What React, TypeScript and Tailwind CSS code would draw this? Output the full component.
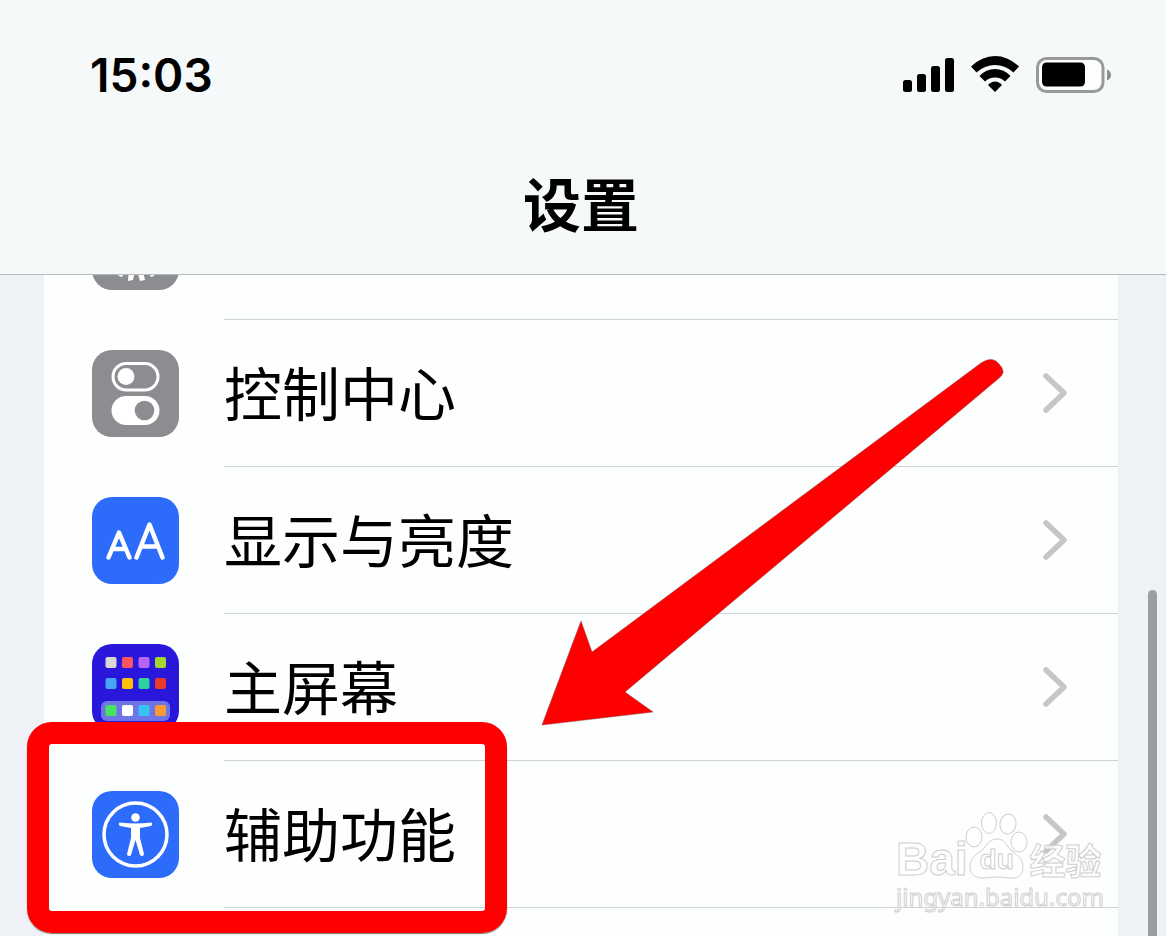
import React from 'react';

const GearIcon = () => (
  <svg viewBox="0 0 87 87" className="size-full">
    <rect width="87" height="87" rx="20" fill="#8b8d91" />
    <circle cx="43.5" cy="43.5" r="23" fill="none" stroke="#fff" strokeWidth="5" />
    <path
      d="M25 70l3-6 6 3-4 7-3-1zM37 64h7l-3 13-5 1zM44 64h6l3 13-5 1zM55 67l5-3 3 6-1 3-3 1z"
      fill="#fff"
    />
  </svg>
);

const ControlIcon = () => (
  <svg viewBox="0 0 87 87" className="size-full">
    <rect width="87" height="87" rx="20" fill="#8b8d91" />
    <rect x="21" y="13.5" width="45" height="26.5" rx="13.25" fill="none" stroke="#fff" strokeWidth="3" />
    <circle cx="34" cy="26.5" r="8.5" fill="#fff" />
    <rect x="19.5" y="46" width="48" height="29" rx="14.5" fill="#fff" />
    <circle cx="52.5" cy="60.5" r="9.8" fill="#8b8d91" />
  </svg>
);

const DisplayIcon = () => (
  <svg viewBox="0 0 87 87" className="size-full">
    <rect width="87" height="87" rx="20" fill="#2d6bfb" />
    <g fill="none" stroke="#fff" strokeWidth="4.5" strokeLinecap="round" strokeLinejoin="round">
      <path d="M16.5 60.5l10.5-25 10.5 25M20.5 52h13" />
      <path d="M44.5 60.5L57.5 27.5l13 33M49 49.5h17" />
    </g>
  </svg>
);

const APPS = [
  ['#d9d7d0', '#f9545f', '#b765f5', '#a2d62d'],
  ['#47a6f5', '#fdc10c', '#2fd2a0', '#ea3a2a'],
  ['#45e35f', '#ffffff', '#35c3f6', '#f79b35'],
];

const HomeIcon = () => (
  <svg viewBox="0 0 87 87" className="size-full">
    <rect width="87" height="87" rx="20" fill="#2a17dc" />
    <rect x="9" y="57" width="69" height="20" rx="6" fill="#6c74e6" />
    {APPS.map((row, r) =>
      row.map((color, c) => (
        <rect key={`${r}-${c}`} x={13.5 + c * 16.5} y={[13, 34, 61][r]} width="11" height="11" rx="2" fill={color} />
      ))
    )}
  </svg>
);

const AccessibilityIcon = () => (
  <svg viewBox="0 0 87 87" className="size-full">
    <rect width="87" height="87" rx="20" fill="#2d6bfb" />
    <circle cx="43.5" cy="43.5" r="31.5" fill="none" stroke="#fff" strokeWidth="3.5" />
    <circle cx="43.5" cy="26.5" r="4.3" fill="#fff" />
    <path
      d="M27.5 31.5q-1.5 2 .5 3.5l11 2v10l-4 16q0 2 2 2t2-1l4.5-15 4.5 15q.5 1 2.2 1t1.8-2l-4-16v-10l11-2q2-1.5.5-3.5-16 2-32 0z"
      fill="#fff"
    />
  </svg>
);

const ROWS = [
  { label: '', icon: <GearIcon /> },
  { label: '控制中心', icon: <ControlIcon /> },
  { label: '显示与亮度', icon: <DisplayIcon /> },
  { label: '主屏幕', icon: <HomeIcon /> },
  { label: '辅助功能', icon: <AccessibilityIcon /> },
];

const Chevron = () => (
  <svg viewBox="0 0 26 42" className="w-[26px] h-[42px] shrink-0">
    <path d="M4 4l18 17L4 38" fill="none" stroke="#c4c6c9" strokeWidth="5.5" strokeLinecap="round" strokeLinejoin="round" />
  </svg>
);

const StatusBar = () => (
  <div className="h-[150px] pl-[90px] pr-[54px] flex items-center justify-between">
    <time className="font-['Inter'] font-semibold text-[46px] leading-none">15:03</time>
    <div className="flex items-center gap-4">
      <svg viewBox="0 0 53 36" className="w-[53px] h-9">
        <rect x="0" y="23" width="9" height="12" rx="2.5" />
        <rect x="14" y="17" width="9" height="18" rx="2.5" />
        <rect x="28" y="9" width="9" height="26" rx="2.5" />
        <rect x="42" y="1" width="9" height="34" rx="2.5" />
      </svg>
      <svg viewBox="0 0 48 36" className="w-12 h-9 overflow-visible">
        <path d="M-1 9.5Q10 -1 23 -1T47 9.5L41.5 15.5Q33.5 8 23 8T4.500 15.5z" />
        <path d="M7.5 19Q14 12 23 12T38.5 19L33 24.5Q29 20.5 23 20.5T13 24.5z" />
        <path d="M16 28Q19 24.5 23 24.5T30 28L23 35z" />
      </svg>
      <svg viewBox="0 0 76 36" className="w-[76px] h-9">
        <rect x="1.5" y="1.5" width="65.5" height="33" rx="9" fill="#fcfdfd" stroke="#97999b" strokeWidth="3" />
        <rect x="6" y="5.5" width="43" height="24" rx="4.5" />
        <path d="M71 12.5q4 1.5 4 5.5t-4 5.5z" fill="#8b8d8f" />
      </svg>
    </div>
  </div>
);

const Watermark = () => (
  <div className="absolute right-[60px] bottom-[22px] w-[210px] text-white/70 [-webkit-text-stroke:1px_#cfcfcf] pointer-events-none">
    <div className="flex items-end">
      <span className="font-['Liberation_Sans'] font-bold text-[46px] leading-[42px]">Bai</span>
      <div className="relative w-[62px] h-[68px] shrink-0">
        <svg viewBox="0 0 62 68" className="size-full overflow-visible" fill="#fff" fillOpacity="0.7" stroke="#cfcfcf">
          <ellipse cx="6" cy="25" rx="8" ry="10" />
          <ellipse cx="21" cy="11" rx="7.5" ry="10.5" />
          <ellipse cx="40" cy="12" rx="8" ry="10" transform="rotate(10 40 12)" />
          <ellipse cx="51" cy="30" rx="8" ry="10" />
          <path d="M29 27c-8 0-10 7-16 12-7 5-11 9-11 16 0 7 5 11 12 11 6 0 9-1 15-1s9 1 15 1c7 0 11-4 11-11 0-7-4-11-11-16-6-5-7-12-15-12z" />
        </svg>
        <span className="absolute left-3 bottom-1 font-['Liberation_Sans'] font-bold text-[28px] leading-8">du</span>
      </div>
      <span className="font-['Noto_Sans_CJK_SC',sans-serif] font-bold text-[36px] leading-[42px] whitespace-nowrap">经验</span>
    </div>
    <div className="font-['Noto_Sans'] text-[24px] leading-[34px] whitespace-nowrap">jingyan.baidu.com</div>
  </div>
);

export default function App() {
  return (
    <div className="relative h-screen flex flex-col overflow-hidden bg-[#eef1f5] text-black font-['Noto_Sans_CJK_SC',sans-serif]">
      <header className="h-[275px] shrink-0 border-b border-[#b7babd] bg-[#f6f9fa]">
        <StatusBar />
        <h1 className="pt-1 pr-1 text-center text-[58px] leading-[96px] font-bold">设置</h1>
      </header>

      <main className="flex-1 min-h-0 overflow-hidden">
        <ul className="-mt-[102px] ml-11 mr-12 min-h-[800px] bg-[#fdfefe]">
          {ROWS.map((row) => (
            <li key={row.label}>
              <a href="#" className="flex h-[147px] pl-12">
                <span className="size-[87px] self-center shrink-0">{row.icon}</span>
                <span className="ml-[45px] pr-[50px] flex-1 flex items-center justify-between border-b border-[#d0d3d6]">
                  <span className="pb-1 text-[58px] leading-none">{row.label}</span>
                  <Chevron />
                </span>
              </a>
            </li>
          ))}
        </ul>
      </main>

      <div className="absolute right-[9px] top-[590px] bottom-0 w-[9px] rounded-t-full bg-[#9b9da0]" />

      {/* Callout frame and arrow */}
      <div className="absolute left-[27px] top-[722px] w-[480px] h-[211px] border-[22px] border-[#fe0000] rounded-[25px] shadow-[0_1px_1px_#777]" />
      <svg viewBox="0 0 464 368" className="absolute left-[541px] top-[359px] w-[464px] h-[368px]">
        <path
          d="M1 366L40 262l11 31L440 4Q449-2 455 2Q463 9 462 14Q461 17 457 20L84 333l28 20z"
          fill="#fe0000"
          stroke="#8a4a4a"
          strokeWidth="0.5"
        />
      </svg>

      <Watermark />
    </div>
  );
}
